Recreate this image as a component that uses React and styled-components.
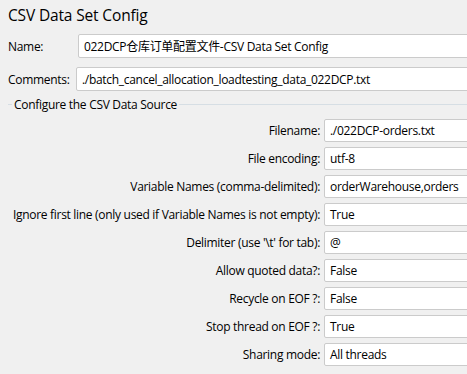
import React from "react";
import styled, { createGlobalStyle } from "styled-components";

const Global = createGlobalStyle`
  html, body { margin: 0; padding: 0; background: #f0f0f0; overflow: hidden; }
  body {
    font-family: "Open Sans", "Noto Sans CJK SC", sans-serif;
    font-size: 12px;
    letter-spacing: -0.3px;
    color: #000;
  }
`;

const Page = styled.div`
  width: 490px;
  padding: 4px 0 0 8px;
  box-sizing: border-box;
  display: flex;
  flex-direction: column;
`;

const Title = styled.h1`
  margin: 0;
  font-weight: 400;
  font-size: 15.5px;
  letter-spacing: -0.15px;
  line-height: 22px;
  height: 30px;
`;

const TopRow = styled.div`
  display: flex;
  align-items: center;
  height: 24px;
  margin-bottom: ${(p) => p.$gap || 0}px;
`;

const TopLabel = styled.label`
  width: ${(p) => p.$w}px;
  flex: none;
`;

const Field = styled.div`
  flex: 1;
  height: 24px;
  box-sizing: border-box;
  background: #fff;
  border: 1px solid #cbcbcb;
  border-radius: 2px;
  padding: 0 5px;
  display: flex;
  align-items: center;
  white-space: nowrap;
  overflow: hidden;
`;

const Legend = styled.div`
  display: flex;
  align-items: center;
  margin-top: 6px;
  height: 14px;
  gap: 2px;
`;

const Line = styled.span`
  height: 1px;
  background: #d6dee4;
  width: ${(p) => (p.$grow ? "auto" : "4px")};
  flex: ${(p) => (p.$grow ? 1 : "none")};
`;

const Grid = styled.div`
  display: grid;
  grid-template-columns: 1fr 166px;
  column-gap: 4px;
  row-gap: 5px;
  margin-top: 8px;
`;

const RowLabel = styled.label`
  text-align: right;
  align-self: center;
  white-space: nowrap;
`;

const RowField = styled(Field)`
  height: 23px;
`;

const rows = [
  ["Filename:", "./022DCP-orders.txt"],
  ["File encoding:", "utf-8"],
  ["Variable Names (comma-delimited):", "orderWarehouse,orders"],
  ["Ignore first line (only used if Variable Names is not empty):", "True"],
  ["Delimiter (use '\\t' for tab):", "@"],
  ["Allow quoted data?:", "False"],
  ["Recycle on EOF ?:", "False"],
  ["Stop thread on EOF ?:", "True"],
  ["Sharing mode:", "All threads"],
];

export default function App() {
  return (
    <>
      <Global />
      <Page>
        <Title>CSV Data Set Config</Title>
        <TopRow $gap={9}>
          <TopLabel $w={70}>Name:</TopLabel>
          <Field>022DCP仓库订单配置文件-CSV Data Set Config</Field>
        </TopRow>
        <TopRow>
          <TopLabel $w={68}>Comments:</TopLabel>
          <Field>./batch_cancel_allocation_loadtesting_data_022DCP.txt</Field>
        </TopRow>
        <Legend>
          <Line />
          <span>Configure the CSV Data Source</span>
          <Line $grow />
        </Legend>
        <Grid>
          {rows.map(([l, v]) => (
            <React.Fragment key={l}>
              <RowLabel>{l}</RowLabel>
              <RowField>{v}</RowField>
            </React.Fragment>
          ))}
        </Grid>
      </Page>
    </>
  );
}
